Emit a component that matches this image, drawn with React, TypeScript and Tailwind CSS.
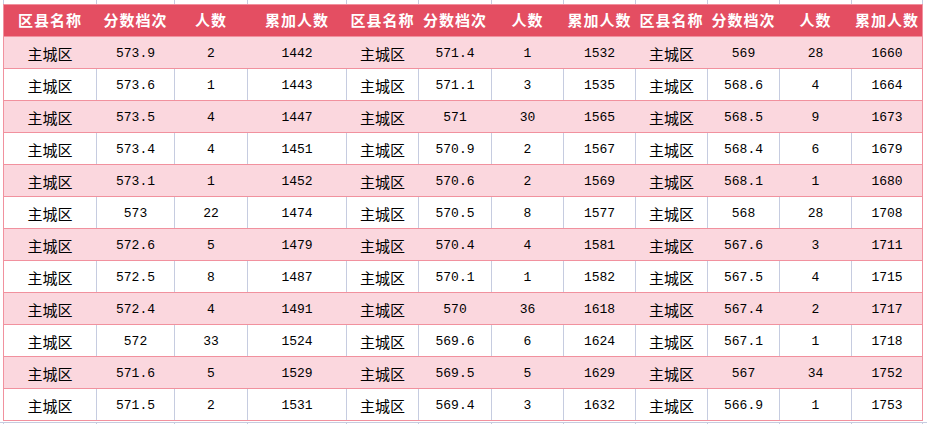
const widths = [93, 78, 73, 99, 72, 73, 72, 72, 72, 72, 72, 71];

const headers = ['区县名称', '分数档次', '人数', '累加人数'];

const rows: [string, string, string][][] = [
  [['573.9', '2', '1442'], ['571.4', '1', '1532'], ['569', '28', '1660']],
  [['573.6', '1', '1443'], ['571.1', '3', '1535'], ['568.6', '4', '1664']],
  [['573.5', '4', '1447'], ['571', '30', '1565'], ['568.5', '9', '1673']],
  [['573.4', '4', '1451'], ['570.9', '2', '1567'], ['568.4', '6', '1679']],
  [['573.1', '1', '1452'], ['570.6', '2', '1569'], ['568.1', '1', '1680']],
  [['573', '22', '1474'], ['570.5', '8', '1577'], ['568', '28', '1708']],
  [['572.6', '5', '1479'], ['570.4', '4', '1581'], ['567.6', '3', '1711']],
  [['572.5', '8', '1487'], ['570.1', '1', '1582'], ['567.5', '4', '1715']],
  [['572.4', '4', '1491'], ['570', '36', '1618'], ['567.4', '2', '1717']],
  [['572', '33', '1524'], ['569.6', '6', '1624'], ['567.1', '1', '1718']],
  [['571.6', '5', '1529'], ['569.5', '5', '1629'], ['567', '34', '1752']],
  [['571.5', '2', '1531'], ['569.4', '3', '1632'], ['566.9', '1', '1753']],
];

const cjk = { fontFamily: '"Noto Sans CJK SC", "Noto Sans", sans-serif' };
const mono = { fontFamily: '"Liberation Mono", "DejaVu Sans Mono", monospace' };

// thin spacer strip above/below the table that only shows the sheet's gridlines
function GridStrip({ h }: { h: string }) {
  return (
    <div className={`flex ${h}`}>
      <div className="w-[4px] shrink-0 border-r border-[#c6cce0]" />
      {widths.map((w, i) => (
        <div key={i} className="shrink-0 border-r border-[#c6cce0]" style={{ width: w }} />
      ))}
    </div>
  );
}

export default function App() {
  return (
    <div className="w-[927px] h-[424px] bg-white overflow-hidden text-black">
      <GridStrip h="h-[4px]" />

      <div className="ml-[3px] w-[920px] border-l border-t border-[#f1919e]">
        {/* header */}
        <div className="flex h-[32px] bg-[#e44e62] border-b border-[#f1919e]">
          {widths.map((w, i) => (
            <div
              key={i}
              style={{ width: w, ...cjk }}
              className={
                'shrink-0 flex items-center justify-center text-[15px] font-bold text-white tracking-[1px] border-r ' +
                (i === 11 ? 'border-[#f1919e]' : 'border-[#e44e62]')
              }
            >
              {headers[i % 4]}
            </div>
          ))}
        </div>

        {rows.map((row, r) => {
          const pink = r % 2 === 0;
          const cells = row.flatMap(g => ['主城区', ...g]);
          return (
            <div
              key={r}
              className={'flex h-[32px] border-b border-[#f1919e] ' + (pink ? 'bg-[#fbd7de]' : 'bg-white')}
            >
              {cells.map((c, i) => (
                <div
                  key={i}
                  style={{ width: widths[i], ...(i % 4 === 0 ? cjk : mono) }}
                  className={
                    'shrink-0 flex items-center justify-center pt-[3px] border-r ' +
                    (i % 4 === 0 ? 'text-[15px] ' : 'text-[13px] ') +
                    (i === 11 ? 'border-[#f1919e]' : pink ? 'border-[#fbd7de]' : 'border-[#c6cce0]')
                  }
                >
                  {c}
                </div>
              ))}
            </div>
          );
        })}
      </div>

      <div className="h-[1px]" />
      <div className="border-t border-[#c6cce0]">
        <GridStrip h="h-[3px]" />
      </div>
    </div>
  );
}
